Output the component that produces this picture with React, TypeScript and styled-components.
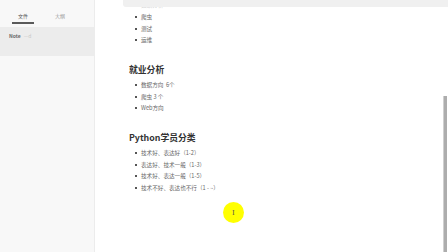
import React from "react";
import styled, { createGlobalStyle } from "styled-components";

const Global = createGlobalStyle`
  html, body { margin: 0; padding: 0; background: #fff; }
  body { width: 448px; height: 252px; overflow: hidden; font-family: "Noto Sans CJK SC", "Noto Sans", sans-serif; }
`;

const Page = styled.div`
  display: flex;
  width: 448px;
  height: 252px;
`;

const Sidebar = styled.aside`
  width: 94px;
  flex: none;
  background: #f8f8f8;
  border-right: 1px solid #ececec;
  display: flex;
  flex-direction: column;
`;

const Tabs = styled.div`
  display: flex;
  height: 27px;
  padding: 0 8px 0 12px;
`;

const Tab = styled.div<{ $active?: boolean }>`
  width: 29px;
  margin-right: 15px;
  display: flex;
  align-items: center;
  justify-content: center;
  font-size: 5px;
  color: ${(p) => (p.$active ? "#555" : "#999")};
  border-bottom: 2px solid ${(p) => (p.$active ? "#5a5a5a" : "transparent")};
  box-sizing: border-box;
  padding-top: 8px;
  height: 24px;
`;

const NoteRow = styled.div`
  height: 29px;
  background: #ececec;
  display: flex;
  align-items: flex-start;
  padding: 5px 0 0 9px;
  box-sizing: border-box;
  font-size: 5px;
  font-weight: 700;
  color: #666;
  gap: 3px;
`;

const Faint = styled.span`
  color: #c8c8c8;
  font-weight: 400;
`;

const Main = styled.main`
  flex: 1;
  position: relative;
  overflow: hidden;
`;

const TopBar = styled.div`
  position: absolute;
  left: 28px;
  right: 0;
  top: 0;
  height: 7px;
  background: #f0f0f0;
  border-radius: 0 0 0 3px;
`;

const Content = styled.div`
  padding-left: 40px;
  margin-top: -0.5px;
  display: flex;
  flex-direction: column;
`;

const List = styled.ul`
  list-style: none;
  margin: 0;
  padding: 0;
`;

const Item = styled.li<{ $faint?: boolean }>`
  display: flex;
  align-items: center;
  height: 11.7px;
  font-size: 5.6px;
  color: ${(p) => (p.$faint ? "#cfcfcf" : "#666")};
  white-space: pre;
  &::before {
    content: "";
    width: 2px;
    height: 2px;
    background: ${(p) => (p.$faint ? "#ddd" : "#555")};
    margin-right: 4px;
    flex: none;
  }
`;

const Heading = styled.h2<{ $top: number; $bottom: number }>`
  margin: ${(p) => p.$top}px 0 ${(p) => p.$bottom}px -6px;
  font-size: 8.8px;
  font-weight: 700;
  color: #333;
  line-height: 12px;
`;

const Scrollbar = styled.div`
  position: absolute;
  right: 1px;
  top: 96px;
  width: 3px;
  height: 156px;
  background: #adadad;
  border-left: 1px solid #d0d0d0;
`;

const Cursor = styled.div`
  position: absolute;
  left: 128px;
  top: 202px;
  width: 21px;
  height: 21px;
  border-radius: 50%;
  background: #ffff00;
  display: flex;
  align-items: center;
  justify-content: center;
  font-family: "DejaVu Serif", serif;
  font-size: 7px;
  color: #555;
`;

export default function App() {
  return (
    <>
      <Global />
      <Page>
        <Sidebar>
          <Tabs>
            <Tab $active>文件</Tab>
            <Tab>大纲</Tab>
          </Tabs>
          <NoteRow>
            Note <Faint>—d</Faint>
          </NoteRow>
        </Sidebar>
        <Main>
          <Content>
            <List>
              <Item $faint>数据分析</Item>
              <Item>爬虫</Item>
              <Item>测试</Item>
              <Item>运维</Item>
            </List>
            <Heading $top={17.7} $bottom={3.2}>就业分析</Heading>
            <List>
              <Item>数据方向  6个</Item>
              <Item>爬虫 3 个</Item>
              <Item>Web方向</Item>
            </List>
            <Heading $top={17.8} $bottom={3.2}>Python学员分类</Heading>
            <List>
              <Item>技术好、表达好（1-2）</Item>
              <Item>表达好、技术一般（1-3）</Item>
              <Item>技术好、表达一般（1-5）</Item>
              <Item>技术不好、表达也不行（1 - ~）</Item>
            </List>
          </Content>
          <TopBar />
          <Scrollbar />
          <Cursor>I</Cursor>
        </Main>
      </Page>
    </>
  );
}
